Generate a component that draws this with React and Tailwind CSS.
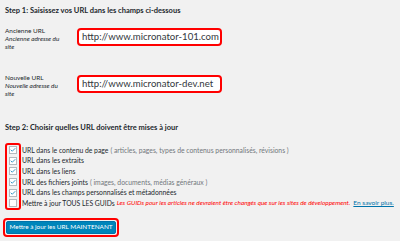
import { Check } from "lucide-react";

const rows = [
    { label: "URL dans le contenu de page", note: " ( articles, pages, types de contenus personnalisés, révisions )", checked: true },
    { label: "URL dans les extraits", checked: true },
    { label: "URL dans les liens", checked: true },
    { label: "URL des fichiers joints", note: " ( images, documents, médias généraux )", checked: true },
    { label: "URL dans les champs personnalisés et métadonnées", checked: true },
    { label: "Mettre à jour TOUS LES GUIDs", checked: false, guid: true },
];

function UrlField({ title, hint, value }) {
    return (
        <div className="flex items-start h-[47px]">
            <div className="w-[77px] shrink-0 pl-[5px] text-[6.4px] leading-[8px] text-[#23282d]">
                <div className="mt-[-1px]">{title}</div>
                <div className="italic w-[62px]">{hint}</div>
            </div>
            <div className="w-[145px] h-[18px] shrink-0 border-2 border-[#f00] rounded-[4px] bg-white flex items-center pl-[3px] text-[9.6px] text-[#32373c] whitespace-nowrap overflow-hidden">
                {value}
            </div>
        </div>
    );
}

export default function App() {
    return (
        <div className="w-[400px] h-[241px] bg-[#f1f1f1] overflow-hidden" style={{ fontFamily: 'Lato, sans-serif' }}>
            <h3 className="pl-[5px] pt-[6px] text-[7.5px] leading-[10px] font-bold text-[#23282d] whitespace-nowrap">
                Step 1: Saisissez vos URL dans les champs ci-dessous
            </h3>
            <div className="mt-[12px]">
                <UrlField title="Ancienne URL" hint="Ancienne adresse du site" value="http://www.micronator-101.com" />
                <UrlField title="Nouvelle URL" hint="Nouvelle adresse du site" value="http://www.micronator-dev.net" />
            </div>
            <h3 className="pl-[5px] mt-[1px] text-[7.5px] leading-[10px] font-bold text-[#23282d] whitespace-nowrap">
                Step 2: Choisir quelles URL doivent être mises à jour
            </h3>
            <div className="relative mt-[12px] pl-[9px] h-[64px]">
                <div className="absolute left-[5px] top-[-2px] w-[16px] h-[67px] border-2 border-[#f00] rounded-[3px]" />
                {rows.map((r) => (
                    <div key={r.label} className="flex items-center h-[10.6px] text-[6.8px] leading-none whitespace-nowrap">
                        <span className="relative w-[8px] h-[8px] shrink-0 bg-white border border-[#b4b9be] mr-[5px] flex items-center justify-center">
                            {r.checked && <Check className="text-[#1e8cbe]" size={8} strokeWidth={3.5} />}
                        </span>
                        <span className="text-[#23282d]">{r.label}</span>
                        {r.note && <span className="text-[#72777c] ml-[2px]">{r.note}</span>}
                        {r.guid && (
                            <>
                                <span className="ml-[2px] italic text-[#f00] text-[6.4px]">
                                    Les GUIDs pour les articles ne devraient être changés que sur les sites de développement.
                                </span>
                                <span className="ml-[3px] text-[#0073aa] underline text-[6.5px]">En savoir plus.</span>
                            </>
                        )}
                    </div>
                ))}
            </div>
            <div className="mt-[9px] ml-[3px] w-[116px] h-[19px] border-2 border-[#f00] rounded-[4px] p-[1px]">
                <div className="h-[13px] bg-[#0085ba] border border-[#0073aa] rounded-[2px] text-white text-[6.4px] leading-none whitespace-nowrap flex items-center justify-center">
                    Mettre à jour les URL MAINTENANT
                </div>
            </div>
        </div>
    );
}
